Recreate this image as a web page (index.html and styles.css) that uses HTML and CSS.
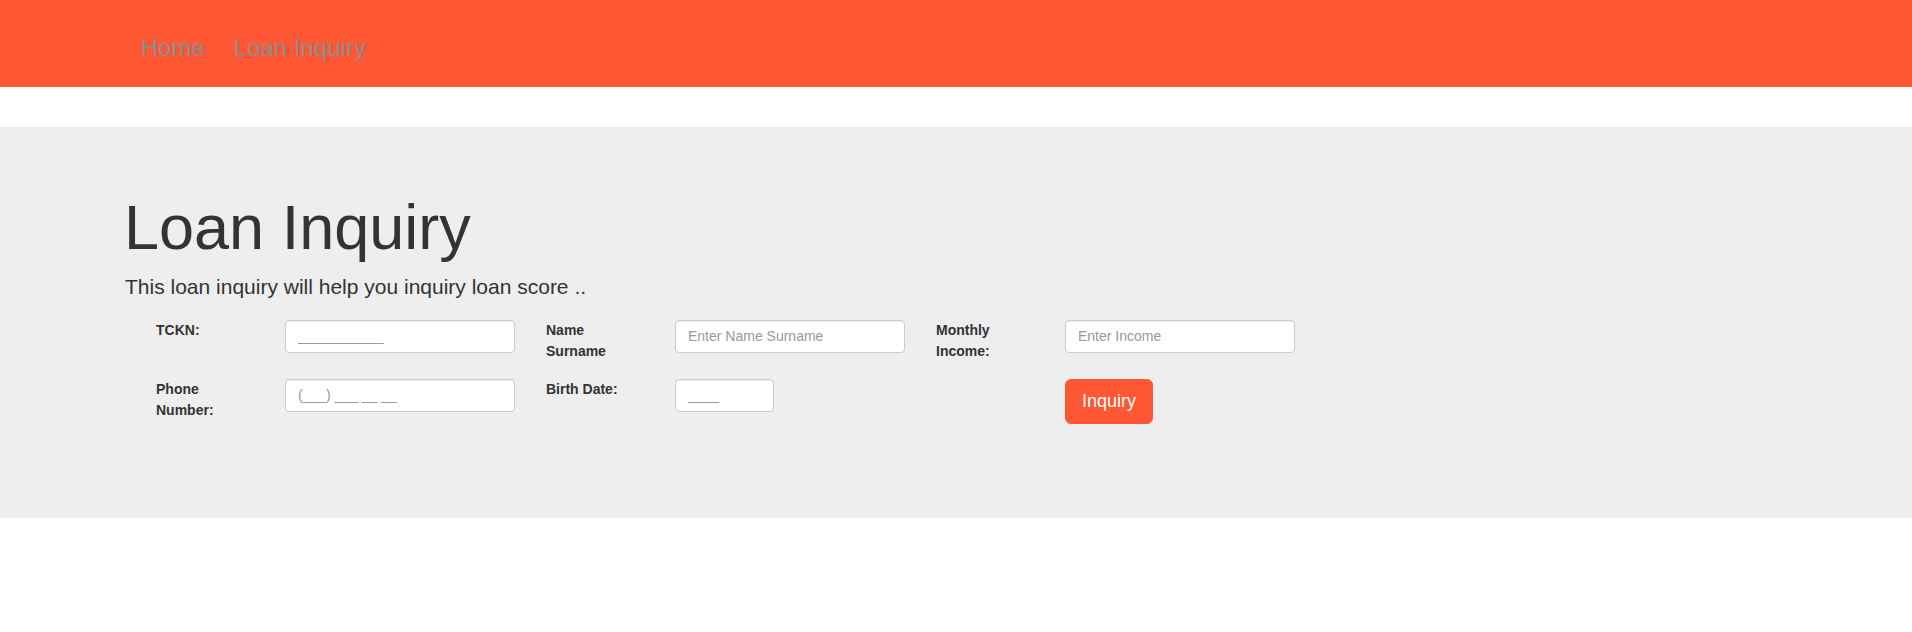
FILE: index.html
```html
<!DOCTYPE html>
<html lang="en">
<head>
<meta charset="utf-8">
<title>Loan Inquiry</title>
<link rel="stylesheet" href="styles.css">
</head>
<body>
<nav class="navbar">
  <a class="nav-link" href="#">Home</a>
  <a class="nav-link" href="#">Loan Inquiry</a>
</nav>

<section class="jumbotron">
  <h1 class="title">Loan Inquiry</h1>
  <p class="lead">This loan inquiry will help you inquiry loan score ..</p>

  <form class="inquiry-form">
    <div class="form-row">
      <div class="field">
        <label class="field-label">TCKN:</label>
        <input class="field-input" type="text" placeholder="___________">
      </div>
      <div class="field">
        <label class="field-label">Name Surname</label>
        <input class="field-input" type="text" placeholder="Enter Name Surname">
      </div>
      <div class="field">
        <label class="field-label">Monthly Income:</label>
        <input class="field-input" type="text" placeholder="Enter Income">
      </div>
    </div>
    <div class="form-row">
      <div class="field">
        <label class="field-label">Phone Number:</label>
        <input class="field-input" type="text" placeholder="(___) ___ __ __">
      </div>
      <div class="field">
        <label class="field-label">Birth Date:</label>
        <input class="field-input field-input-short" type="text" placeholder="____">
      </div>
      <div class="field">
        <span class="field-label"></span>
        <div><button class="btn-inquiry" type="button">Inquiry</button></div>
      </div>
    </div>
  </form>
</section>
</body>
</html>
```

FILE: styles.css
```css
* {
  box-sizing: border-box;
}

html, body {
  margin: 0;
  padding: 0;
  background: #ffffff;
}

body {
  font-family: "Liberation Sans", Arial, sans-serif;
  color: #333333;
  font-size: 14px;
}

.navbar {
  height: 87px;
  background: #ff5733;
  display: flex;
  gap: 29px;
  padding: 34px 0 0 141px;
  margin-bottom: 40px;
}

.nav-link {
  font-size: 24px;
  line-height: 27px;
  color: #8b8b8b;
  text-decoration: none;
}

.jumbotron {
  background: #eeeeee;
  padding: 66px 0 94px 124px;
}

.title {
  font-size: 63px;
  font-weight: 400;
  line-height: 1.1;
  margin: 0 0 10px;
  color: #333333;
}

.lead {
  font-size: 21px;
  line-height: 1.4;
  margin: 0 0 18px;
  padding-left: 1px;
  font-weight: 400;
}

.inquiry-form {
  padding-left: 32px;
  display: flex;
  flex-direction: column;
  gap: 17px;
}

.form-row {
  display: flex;
  gap: 31px;
}

.field {
  display: grid;
  grid-template-columns: 129px 230px;
  align-items: start;
}

.field-label {
  font-weight: 700;
  font-size: 14px;
  line-height: 21px;
  padding-right: 37px;
  color: #333333;
}

.field-input {
  height: 33px;
  width: 230px;
  border: 1px solid #cccccc;
  border-radius: 4px;
  background: #ffffff;
  padding: 6px 12px;
  font-family: "Liberation Sans", Arial, sans-serif;
  font-size: 14px;
  color: #555555;
  box-shadow: inset 0 1px 1px rgba(0, 0, 0, 0.075);
}

.field-input::placeholder {
  color: #999999;
}

.field-input-short {
  width: 99px;
}

.btn-inquiry {
  height: 45px;
  padding: 10px 16px;
  background: #ff5733;
  color: #ffffff;
  border: 1px solid #ff5733;
  border-radius: 6px;
  font-family: "Liberation Sans", Arial, sans-serif;
  font-size: 18px;
  line-height: 23px;
}
```
